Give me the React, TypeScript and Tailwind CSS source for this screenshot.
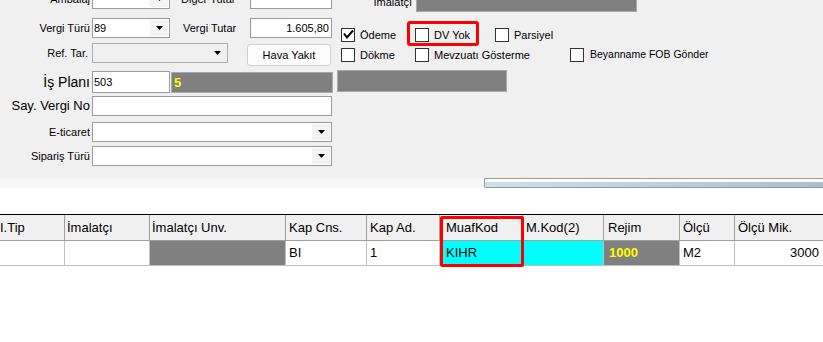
import React from 'react';

const Arrow = () => (
  <svg width="7" height="4" viewBox="0 0 7 4">
    <path d="M0 0H7L3.5 4Z" fill="#000" />
  </svg>
);

const Combo = ({ className, value, disabled }: { className: string; value?: string; disabled?: boolean }) => (
  <div
    className={`flex h-[20px] shrink-0 items-stretch border ${
      disabled ? 'border-[#adadad] bg-[#f0f0f0]' : 'border-[#999] bg-white'
    } ${className}`}
  >
    <div className="flex-1 pl-[1px] leading-[18px]">{value}</div>
    <div className={`my-[1px] mr-[1px] flex w-[18px] items-center justify-center ${disabled ? '' : 'bg-[#f3f3f3]'}`}>
      <Arrow />
    </div>
  </div>
);

const Check = ({ checked }: { checked?: boolean }) => (
  <span className="flex h-[14px] w-[14px] shrink-0 items-center justify-center border border-[#333] bg-white">
    {checked && (
      <svg width="12" height="12" viewBox="0 0 12 12">
        <path d="M2 4.5L5 8.5L11 1.5" fill="none" stroke="#000" strokeWidth="2" />
      </svg>
    )}
  </span>
);

const Label = ({ children, className = '' }: { children: React.ReactNode; className?: string }) => (
  <div className={`w-[92px] shrink-0 pr-[2px] text-right ${className}`}>{children}</div>
);

const cols = [
  { title: 'I.Tip', w: 'w-[65px]', pl: 'pl-0' },
  { title: 'İmalatçı', w: 'w-[85px]', pl: 'pl-[2px]' },
  { title: 'İmalatçı Unv.', w: 'w-[136px]', pl: 'pl-[2px]' },
  { title: 'Kap Cns.', w: 'w-[81px]', pl: 'pl-[3px]' },
  { title: 'Kap Ad.', w: 'w-[73px]', pl: 'pl-[3px]' },
  { title: 'MuafKod', w: 'w-[83px]', pl: 'pl-[6px]' },
  { title: 'M.Kod(2)', w: 'w-[81px]', pl: 'pl-[3px]' },
  { title: 'Rejim', w: 'w-[76px]', pl: 'pl-[4px]' },
  { title: 'Ölçü', w: 'w-[55px]', pl: 'pl-[3px]' },
  { title: 'Ölçü Mik.', w: 'w-[120px]', pl: 'pl-[3px]' },
];

export default function App() {
  return (
    <div className="relative h-[342px] w-[823px] overflow-hidden bg-white font-['Liberation_Sans',Arial,sans-serif] text-[11px] text-black">
      {/* form panel */}
      <div className="relative flex h-[178px] bg-[#f0f0f0]">
        <div className="flex w-[333px] shrink-0 flex-col">
          <div className="-mt-[11px] flex h-[20px] items-center">
            <Label>Ambalaj</Label>
            <Combo className="w-[78px]" />
            <div className="w-[80px] shrink-0 pl-[11px]">Diğer Tutar</div>
            <div className="h-[20px] w-[82px] border border-[#999] bg-white" />
          </div>

          <div className="mt-[9px] flex h-[20px] items-center">
            <Label>Vergi Türü</Label>
            <Combo className="w-[78px]" value="89" />
            <div className="w-[80px] shrink-0 pl-[13px]">Vergi Tutar</div>
            <div className="h-[20px] w-[82px] border border-[#999] bg-white pr-[2px] text-right leading-[18px]">1.605,80</div>
          </div>

          <div className="mt-[5px] flex h-[23px] items-start">
            <Label className="h-[20px] pr-[4px] leading-[20px]">Ref. Tar.</Label>
            <Combo className="w-[136px]" disabled />
            <button className="ml-[19px] mt-[1px] h-[22px] w-[84px] rounded-[3px] border border-[#d0d0d0] bg-[#fcfcfc] text-[11px]">
              Hava Yakıt
            </button>
          </div>

          <div className="mt-[5px] flex h-[22px] items-center">
            <Label className="text-[14px]">İş Planı</Label>
            <div className="h-[22px] w-[78px] border border-[#999] bg-white pl-[1px] leading-[20px]">503</div>
            <div className="ml-[1px] h-[21px] w-[162px] border border-[#a9a9a9] bg-[#808080] pl-[2px] text-[13px] font-bold leading-[19px] text-[#ffff00]">
              5
            </div>
          </div>

          <div className="mt-[3px] flex h-[20px] items-center">
            <Label className="text-[13px]">Say. Vergi No</Label>
            <div className="h-[20px] w-[240px] border border-[#999] bg-white" />
          </div>

          <div className="mt-[6px] flex h-[20px] items-center">
            <Label>E-ticaret</Label>
            <Combo className="w-[240px]" />
          </div>

          <div className="mt-[4px] flex h-[20px] items-center">
            <Label>Sipariş Türü</Label>
            <Combo className="w-[240px]" />
          </div>
        </div>

        <div className="ml-[4px] flex flex-col">
          <div className="-mt-[8px] flex h-[20px] items-center">
            <div className="w-[79px] shrink-0 pr-[4px] text-right">İmalatçı</div>
            <div className="h-[20px] w-[221px] border border-[#a9a9a9] bg-[#808080]" />
          </div>

          <div className="mt-[16px] flex h-[14px] items-center">
            <label className="ml-[4px] flex w-[74px] items-center gap-[5px]">
              <Check checked />
              Ödeme
            </label>
            <label className="flex w-[80px] items-center gap-[5px]">
              <Check />
              DV Yok
            </label>
            <label className="flex items-center gap-[5px]">
              <Check />
              Parsiyel
            </label>
          </div>

          <div className="mt-[6px] flex h-[14px] items-center">
            <label className="ml-[4px] flex w-[74px] items-center gap-[5px]">
              <Check />
              Dökme
            </label>
            <label className="flex w-[155px] items-center gap-[5px]">
              <Check />
              Mevzuatı Gösterme
            </label>
            <label className="flex items-center gap-[6px] text-[10.5px]">
              <Check />
              Beyanname FOB Gönder
            </label>
          </div>

          <div className="mt-[8px] h-[22px] w-[170px] border border-[#a9a9a9] bg-[#808080]" />
        </div>

        <div className="pointer-events-none absolute left-[407px] top-[21px] h-[25px] w-[72px] rounded-[3px] border-[3px] border-[#ff0000]" />
      </div>

      {/* strip with scrollbar */}
      <div className="flex h-[10px] bg-[#f7f7f7]">
        <div className="ml-[484px] flex flex-1 flex-col rounded-l-[2px] border border-r-0 border-[#999] bg-white">
          <div className="mt-[3px] flex-1 bg-gradient-to-r from-[#c9e1ef] to-[#a8c0cf]" />
        </div>
      </div>

      {/* grid */}
      <div className="relative mt-[26px] border-t border-black text-[13px]">
        <div className="flex h-[26px] border-b border-[#a0a0a0] bg-[#f0f0f0]">
          {cols.map((c) => (
            <div key={c.title} className={`flex shrink-0 items-center border-r border-[#a0a0a0] ${c.w} ${c.pl}`}>
              {c.title}
            </div>
          ))}
        </div>
        <div className="flex h-[25px] border-b border-[#c0c0c0]">
          <div className="w-[65px] shrink-0 border-r border-[#c0c0c0]" />
          <div className="w-[85px] shrink-0 border-r border-[#c0c0c0]" />
          <div className="w-[136px] shrink-0 border-r border-[#c0c0c0] bg-[#808080]" />
          <div className="flex w-[81px] shrink-0 items-center border-r border-[#c0c0c0] pl-[3px]">BI</div>
          <div className="flex w-[73px] shrink-0 items-center border-r border-[#c0c0c0] pl-[3px]">1</div>
          <div className="flex w-[83px] shrink-0 items-center border-r border-[#c0c0c0] bg-[#00ffff] pl-[6px]">KIHR</div>
          <div className="w-[81px] shrink-0 border-r border-[#c0c0c0] bg-[#00ffff]" />
          <div className="flex w-[76px] shrink-0 items-center border-r border-[#c0c0c0] bg-[#808080] pl-[5px] font-bold text-[#ffff00]">
            1000
          </div>
          <div className="flex w-[55px] shrink-0 items-center border-r border-[#c0c0c0] pl-[3px]">M2</div>
          <div className="flex w-[88px] shrink-0 items-center justify-end pr-[4px]">3000</div>
        </div>

        <div className="pointer-events-none absolute left-[440px] top-[1px] h-[51px] w-[84px] rounded-[2px] border-[3px] border-[#ff0000]" />
      </div>
    </div>
  );
}
